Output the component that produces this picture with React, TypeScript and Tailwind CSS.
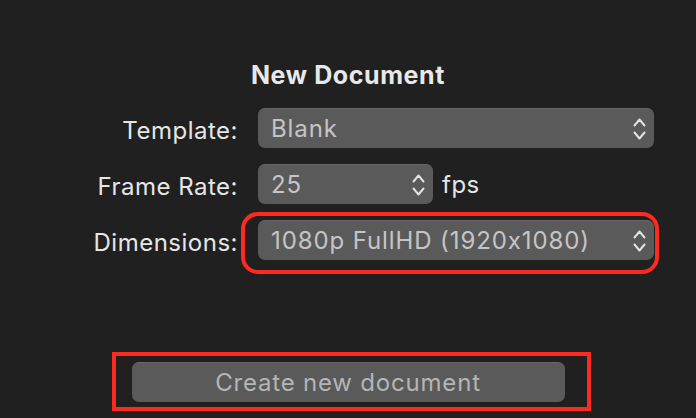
import React from "react";

function Chevrons({ className = "" }: { className?: string }) {
  return (
    <svg
      width="13"
      height="22"
      viewBox="0 0 13 22"
      fill="none"
      stroke="#e2e2e2"
      strokeWidth="2"
      strokeLinecap="round"
      strokeLinejoin="round"
      className={className}
    >
      <path d="M1.5 7.5 L6.5 1.5 L11.5 7.5" />
      <path d="M1.5 14.5 L6.5 20.5 L11.5 14.5" />
    </svg>
  );
}

function Select({ value, width }: { value: string; width: string }) {
  return (
    <div
      className={`${width} h-[40px] rounded-[7px] bg-[#5a5a5a] border-t border-[#666] flex items-center justify-between pl-[13px] pr-[8px]`}
    >
      <span className="text-[#c5c5c5] tracking-[0.9px]">{value}</span>
      <Chevrons />
    </div>
  );
}

export default function App() {
  return (
    <div
      className="w-[696px] h-[418px] bg-[#202020] overflow-hidden text-[24px] leading-[28px] tracking-[0.5px] text-[#e6e6e6] [font-feature-settings:'calt'_0]"
      style={{ fontFamily: "Inter, 'Liberation Sans', sans-serif" }}
    >
      {/* Title */}
      <h1 className="mt-[61px] text-center text-[25px] tracking-[0.6px] font-bold text-[#e8e8e8]">
        New Document
      </h1>

      {/* Form */}
      <div className="mt-[19px] flex flex-col gap-[16px]">
        <div className="flex items-center">
          <div className="w-[238px] pt-[5px] text-right">Template:</div>
          <div className="ml-[20px]">
            <Select value="Blank" width="w-[396px]" />
          </div>
        </div>

        <div className="flex items-center">
          <div className="w-[238px] pt-[5px] text-right">Frame Rate:</div>
          <div className="ml-[20px] flex items-center">
            <Select value="25" width="w-[175px]" />
            <span className="ml-[9px] pt-[1px]">fps</span>
          </div>
        </div>

        <div className="flex items-center">
          <div className="w-[238px] pt-[5px] text-right">Dimensions:</div>
          <div className="ml-[20px] relative">
            <Select value="1080p FullHD (1920x1080)" width="w-[396px]" />
            <div className="absolute -left-[17px] -right-[5px] -top-[8px] -bottom-[14px] border-4 border-[#ff2a1f] rounded-[17px] pointer-events-none" />
          </div>
        </div>
      </div>

      {/* Create button */}
      <div className="mt-[102px] flex justify-center">
        <div className="relative">
          <button
            type="button"
            className="w-[433px] h-[40px] rounded-[7px] bg-[#5a5a5a] border-t border-[#666] text-[#b5b5b5] tracking-[0.8px]"
          >
            Create new document
          </button>
          <div className="absolute -left-[20px] -right-[26px] -top-[10px] -bottom-[9px] border-4 border-[#ff2a1f] pointer-events-none" />
        </div>
      </div>
    </div>
  );
}
